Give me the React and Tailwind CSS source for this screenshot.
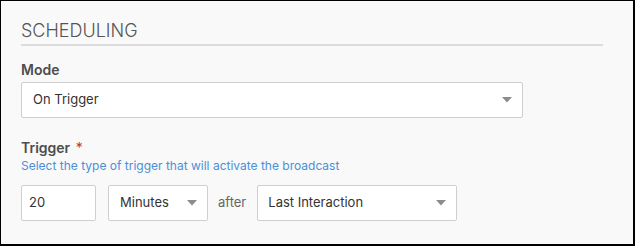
import React from "react";

function Caret() {
  return (
    <svg width="10" height="6" viewBox="0 0 10 6" className="shrink-0">
      <path d="M0 0 L10 0 L5 5.5 Z" fill="#8c8c8c" />
    </svg>
  );
}

function Select({ value, className }) {
  return (
    <div
      className={
        "flex h-[36px] items-center justify-between rounded-[2px] border border-[#cfcfcf] bg-white " +
        className
      }
    >
      <span>{value}</span>
      <Caret />
    </div>
  );
}

export default function App() {
  return (
    <div
      className="h-[246px] w-[635px] border-t border-l border-r-2 border-b-2 border-black bg-[#f9f9f9] text-[#4a4a4a]"
      style={{ fontFamily: "Inter, 'Noto Sans', sans-serif" }}
    >
      <div className="pl-[20px] pr-[30px] pt-[19px]">
        <div className="border-b-2 border-[#dcdcdc] pb-[2px] text-[18px] font-light leading-[22px] text-[#555]">
          SCHEDULING
        </div>
        <div className="mt-[15px] text-[14px] font-semibold leading-[18px] text-[#4d4d4d]">Mode</div>
        <Select
          value="On Trigger"
          className="mt-[3px] w-[502px] pl-[11px] pr-[10px] text-[13px] text-[#333]"
        />
        <div className="mt-[21px] text-[14px] font-semibold leading-[18px] text-[#4d4d4d]">
          Trigger <span className="ml-[2px] font-normal text-[#c0392b]">*</span>
        </div>
        <div className="mt-[1px] text-[12px] leading-[16px] text-[#4a90d9]">
          Select the type of trigger that will activate the broadcast
        </div>
        <div className="mt-[11px] flex items-center text-[13px] text-[#333]">
          <div className="flex h-[36px] w-[75px] items-center rounded-[2px] border border-[#cfcfcf] bg-white pl-[7px]">
            20
          </div>
          <Select value="Minutes" className="ml-[12px] w-[100px] pl-[11px] pr-[10px]" />
          <span className="ml-[10px] mr-[11px] text-[#666]">after</span>
          <Select value="Last Interaction" className="w-[200px] pl-[10px] pr-[10px]" />
        </div>
      </div>
    </div>
  );
}
